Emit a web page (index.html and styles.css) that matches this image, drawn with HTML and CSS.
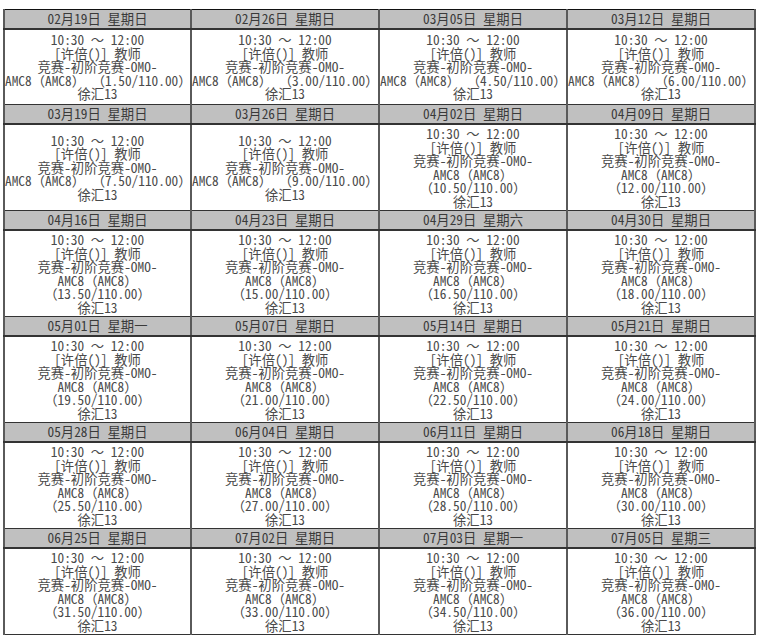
FILE: index.html
```html
<!DOCTYPE html>
<html lang="zh">
<head>
<meta charset="utf-8">
<title>课表</title>
<link rel="stylesheet" href="styles.css">
</head>
<body>
<table class="sched">
<colgroup><col class="c1"><col class="c2"><col class="c3"><col class="c4"></colgroup>
<tbody>
<tr class="hd"><td>02月19日 星期日</td><td>02月26日 星期日</td><td>03月05日 星期日</td><td>03月12日 星期日</td></tr>
<tr class="bd first">
<td>10:30 ～ 12:00<br>[许倍()] 教师<br>竞赛-初阶竞赛-OMO-<br>AMC8（AMC8） （1.50/110.00）<br>徐汇13</td>
<td>10:30 ～ 12:00<br>[许倍()] 教师<br>竞赛-初阶竞赛-OMO-<br>AMC8（AMC8） （3.00/110.00）<br>徐汇13</td>
<td>10:30 ～ 12:00<br>[许倍()] 教师<br>竞赛-初阶竞赛-OMO-<br>AMC8（AMC8） （4.50/110.00）<br>徐汇13</td>
<td>10:30 ～ 12:00<br>[许倍()] 教师<br>竞赛-初阶竞赛-OMO-<br>AMC8（AMC8） （6.00/110.00）<br>徐汇13</td>
</tr>
<tr class="hd"><td>03月19日 星期日</td><td>03月26日 星期日</td><td>04月02日 星期日</td><td>04月09日 星期日</td></tr>
<tr class="bd">
<td>10:30 ～ 12:00<br>[许倍()] 教师<br>竞赛-初阶竞赛-OMO-<br>AMC8（AMC8） （7.50/110.00）<br>徐汇13</td>
<td>10:30 ～ 12:00<br>[许倍()] 教师<br>竞赛-初阶竞赛-OMO-<br>AMC8（AMC8） （9.00/110.00）<br>徐汇13</td>
<td>10:30 ～ 12:00<br>[许倍()] 教师<br>竞赛-初阶竞赛-OMO-<br>AMC8（AMC8）<br>（10.50/110.00）<br>徐汇13</td>
<td>10:30 ～ 12:00<br>[许倍()] 教师<br>竞赛-初阶竞赛-OMO-<br>AMC8（AMC8）<br>（12.00/110.00）<br>徐汇13</td>
</tr>
<tr class="hd"><td>04月16日 星期日</td><td>04月23日 星期日</td><td>04月29日 星期六</td><td>04月30日 星期日</td></tr>
<tr class="bd">
<td>10:30 ～ 12:00<br>[许倍()] 教师<br>竞赛-初阶竞赛-OMO-<br>AMC8（AMC8）<br>（13.50/110.00）<br>徐汇13</td>
<td>10:30 ～ 12:00<br>[许倍()] 教师<br>竞赛-初阶竞赛-OMO-<br>AMC8（AMC8）<br>（15.00/110.00）<br>徐汇13</td>
<td>10:30 ～ 12:00<br>[许倍()] 教师<br>竞赛-初阶竞赛-OMO-<br>AMC8（AMC8）<br>（16.50/110.00）<br>徐汇13</td>
<td>10:30 ～ 12:00<br>[许倍()] 教师<br>竞赛-初阶竞赛-OMO-<br>AMC8（AMC8）<br>（18.00/110.00）<br>徐汇13</td>
</tr>
<tr class="hd"><td>05月01日 星期一</td><td>05月07日 星期日</td><td>05月14日 星期日</td><td>05月21日 星期日</td></tr>
<tr class="bd">
<td>10:30 ～ 12:00<br>[许倍()] 教师<br>竞赛-初阶竞赛-OMO-<br>AMC8（AMC8）<br>（19.50/110.00）<br>徐汇13</td>
<td>10:30 ～ 12:00<br>[许倍()] 教师<br>竞赛-初阶竞赛-OMO-<br>AMC8（AMC8）<br>（21.00/110.00）<br>徐汇13</td>
<td>10:30 ～ 12:00<br>[许倍()] 教师<br>竞赛-初阶竞赛-OMO-<br>AMC8（AMC8）<br>（22.50/110.00）<br>徐汇13</td>
<td>10:30 ～ 12:00<br>[许倍()] 教师<br>竞赛-初阶竞赛-OMO-<br>AMC8（AMC8）<br>（24.00/110.00）<br>徐汇13</td>
</tr>
<tr class="hd"><td>05月28日 星期日</td><td>06月04日 星期日</td><td>06月11日 星期日</td><td>06月18日 星期日</td></tr>
<tr class="bd">
<td>10:30 ～ 12:00<br>[许倍()] 教师<br>竞赛-初阶竞赛-OMO-<br>AMC8（AMC8）<br>（25.50/110.00）<br>徐汇13</td>
<td>10:30 ～ 12:00<br>[许倍()] 教师<br>竞赛-初阶竞赛-OMO-<br>AMC8（AMC8）<br>（27.00/110.00）<br>徐汇13</td>
<td>10:30 ～ 12:00<br>[许倍()] 教师<br>竞赛-初阶竞赛-OMO-<br>AMC8（AMC8）<br>（28.50/110.00）<br>徐汇13</td>
<td>10:30 ～ 12:00<br>[许倍()] 教师<br>竞赛-初阶竞赛-OMO-<br>AMC8（AMC8）<br>（30.00/110.00）<br>徐汇13</td>
</tr>
<tr class="hd"><td>06月25日 星期日</td><td>07月02日 星期日</td><td>07月03日 星期一</td><td>07月05日 星期三</td></tr>
<tr class="bd">
<td>10:30 ～ 12:00<br>[许倍()] 教师<br>竞赛-初阶竞赛-OMO-<br>AMC8（AMC8）<br>（31.50/110.00）<br>徐汇13</td>
<td>10:30 ～ 12:00<br>[许倍()] 教师<br>竞赛-初阶竞赛-OMO-<br>AMC8（AMC8）<br>（33.00/110.00）<br>徐汇13</td>
<td>10:30 ～ 12:00<br>[许倍()] 教师<br>竞赛-初阶竞赛-OMO-<br>AMC8（AMC8）<br>（34.50/110.00）<br>徐汇13</td>
<td>10:30 ～ 12:00<br>[许倍()] 教师<br>竞赛-初阶竞赛-OMO-<br>AMC8（AMC8）<br>（36.00/110.00）<br>徐汇13</td>
</tr>
</tbody>
</table>
</body>
</html>
```
FILE: styles.css
```css
html, body {
  margin: 0;
  padding: 0;
  background: #fff;
}
body {
  padding: 9px 0 0 3px;
}
.sched {
  border-collapse: collapse;
  table-layout: fixed;
  width: 751px;
  font-family: "Noto Sans Mono CJK SC", "Noto Sans CJK SC", monospace;
  font-size: 13.33px;
  color: #4a4a4a;
}
.c1 { width: 187px; }
.c2 { width: 188px; }
.c3 { width: 188px; }
.c4 { width: 188px; }
.sched td {
  padding: 0;
  text-align: center;
  white-space: nowrap;
  overflow: visible;
  border-left: 2px solid #5a5a5a;
  border-right: 2px solid #5a5a5a;
}
.hd td {
  background: #c0c0c0;
  height: 18px;
  line-height: 18px;
  border-top: 1px solid #111;
  border-bottom: 2px solid #333;
  color: #3a3a3a;
}
.bd td {
  height: 85px;
  line-height: 13.5px;
  vertical-align: middle;
  border-bottom: 1px solid #333;
}
.bd.first td {
  height: 74px;
}
```
